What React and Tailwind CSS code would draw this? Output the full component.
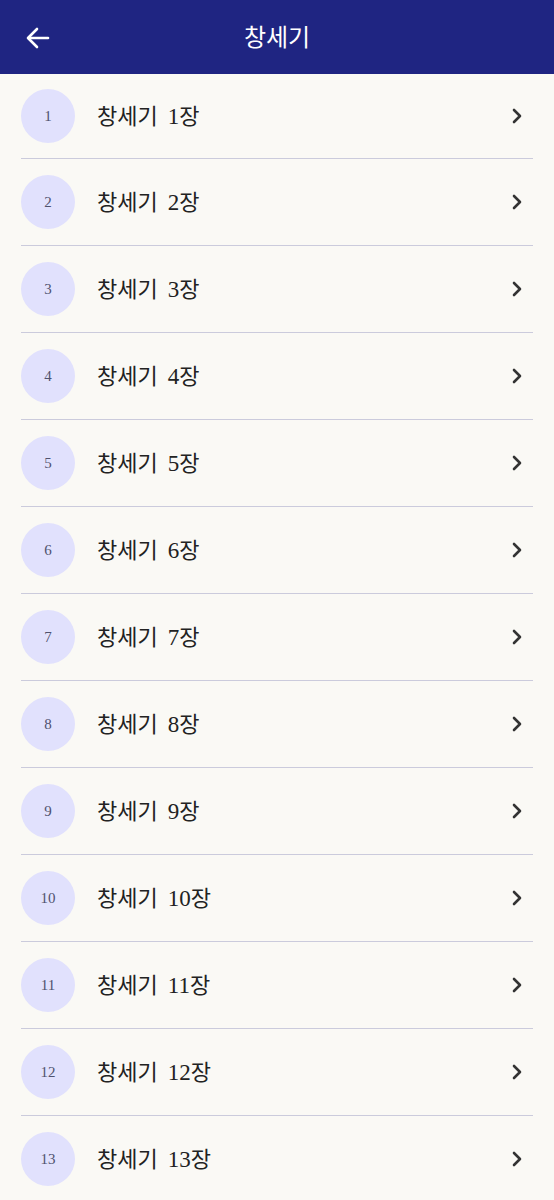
import React from 'react';

const chapters = Array.from({ length: 13 }, (_, i) => i + 1);

const serif = { fontFamily: '"Liberation Serif", "Noto Sans CJK KR", serif' };

const App = () => {
  return (
    <div className="min-h-screen w-[554px] bg-[#faf9f5] overflow-hidden">
      {/* Header */}
      <header className="relative flex h-[74px] items-center justify-center bg-[#1f2582]">
        <button className="absolute left-[26px] top-[27px] text-white">
          <svg width="24" height="22" viewBox="0 0 24 22" fill="none" stroke="currentColor" strokeWidth="2.6" strokeLinecap="round" strokeLinejoin="round">
            <path d="M22 11H3" />
            <path d="M11 2L2 11l9 9" />
          </svg>
        </button>
        <h1 className="text-[24px] text-white font-['Noto_Sans_CJK_KR',sans-serif] pb-[2px]">
          창세기
        </h1>
      </header>

      {/* Chapter list */}
      <ul className="px-[21px]">
        {chapters.map((n) => (
          <li
            key={n}
            className={n === 1 ? 'flex h-[85px] items-center border-b border-[#cbcbdc]' : 'flex h-[87px] items-center border-b border-[#cbcbdc]'}
          >
            <div
              className="flex h-[54px] w-[54px] shrink-0 items-center justify-center rounded-full bg-[#e1e1fd] text-[15px] text-[#50526e]"
              style={serif}
            >
              {n}
            </div>
            <span className="ml-[22px] flex flex-1 items-baseline text-[22px] text-[#222222] font-['Noto_Sans_CJK_KR',sans-serif]">
              <span>창세기</span>
              <span style={serif} className="ml-[10px] text-[23px]">{n}</span>
              <span>장</span>
            </span>
            <svg className="mr-[10px]" width="12" height="16" viewBox="0 0 12 16" fill="none" stroke="#333333" strokeWidth="2.6" strokeLinecap="round" strokeLinejoin="round">
              <path d="M3 2l6 6-6 6" />
            </svg>
          </li>
        ))}
      </ul>
    </div>
  );
};

export default App;
